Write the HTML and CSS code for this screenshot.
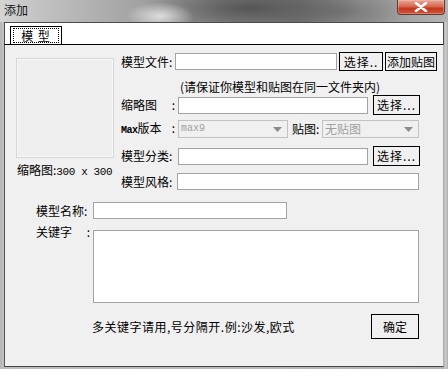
FILE: index.html
```html
<!DOCTYPE html>
<html lang="zh-CN">
<head>
<meta charset="utf-8">
<title>添加</title>
<link rel="stylesheet" href="styles.css">
</head>
<body>
<div class="window">
  <div class="titlebar">
    <span class="title">添加</span>
    <span class="close">
      <svg width="14" height="10" viewBox="0 0 14 10"><path d="M2 1 L12 9 M12 1 L2 9" stroke="#fff" stroke-width="2.6" stroke-linecap="round"/></svg>
    </span>
  </div>
  <div class="client">
    <div class="tabstrip">
      <div class="tab"><span class="tab-label">模 型</span></div>
    </div>
    <div class="panel">
      <div class="top">
        <div class="thumbcol">
          <div class="thumb"></div>
          <div class="caption">缩略图:<span class="mono">300 x 300</span></div>
        </div>
        <div class="form">
          <div class="row row-file">
            <span class="label label-file">模型文件:</span>
            <input class="field field-file" type="text">
            <button class="btn btn-sel1">选择..</button>
            <button class="btn btn-add">添加贴图</button>
          </div>
          <div class="note">(请保证你模型和贴图在同一文件夹内)</div>
          <div class="row row-thumb">
            <span class="label label-split"><span>缩略图</span><span>:</span></span>
            <input class="field field-mid" type="text">
            <button class="btn btn-sel">选择...</button>
          </div>
          <div class="row row-max">
            <span class="label label-split"><span><b class="max">Max</b>版本</span><span>:</span></span>
            <div class="select select-max"><span class="sel-text mono-sm">max9</span><svg class="arrow" width="9" height="5" viewBox="0 0 9 5"><path d="M0 0 H9 L4.5 5 Z" fill="#8c8c8c"/></svg></div>
            <span class="label-map">贴图:</span>
            <div class="select select-map"><span class="sel-text">无贴图</span><svg class="arrow" width="9" height="5" viewBox="0 0 9 5"><path d="M0 0 H9 L4.5 5 Z" fill="#8c8c8c"/></svg></div>
          </div>
          <div class="row row-cat">
            <span class="label">模型分类:</span>
            <input class="field field-mid" type="text">
            <button class="btn btn-sel">选择...</button>
          </div>
          <div class="row row-style">
            <span class="label label-style">模型风格:</span>
            <input class="field field-style" type="text">
          </div>
        </div>
      </div>
      <div class="lower">
        <div class="row row-name">
          <span class="label">模型名称:</span>
          <input class="field field-name" type="text">
        </div>
        <div class="row row-keys">
          <span class="label label-split label-keys"><span>关键字</span><span>:</span></span>
          <textarea class="keys"></textarea>
        </div>
        <div class="footer">
          <span class="hint">多关键字请用,号分隔开.例:沙发,欧式</span>
          <button class="btn btn-ok">确定</button>
        </div>
      </div>
    </div>
  </div>
</div>
</body>
</html>
```

FILE: styles.css
```css
* { box-sizing: border-box; }
html, body { margin: 0; padding: 0; }
body {
  width: 448px;
  height: 369px;
  overflow: hidden;
  font-family: "Noto Sans CJK SC", "Liberation Sans", sans-serif;
  font-size: 12px;
  color: #000;
  background: #bcbcbc;
}
.window {
  width: 448px;
  height: 369px;
  display: flex;
  flex-direction: column;
  background: linear-gradient(to right, #c8c8c8 0, #a9a9a9 1px, #c4c4c4 2px, #bdbdbd 4px, #b4b4b4 444px, #cfcfcf 446px, #a8a8a8 448px);
}
.titlebar {
  height: 22px;
  flex: none;
  display: flex;
  justify-content: space-between;
  align-items: flex-start;
  padding: 0 3px 0 4px;
  background:
    radial-gradient(ellipse 34px 14px at 160px 16px, rgba(230,230,230,0.9), rgba(230,230,230,0)),
    radial-gradient(ellipse 110px 26px at 250px 8px, rgba(80,80,80,0.9), rgba(80,80,80,0)),
    radial-gradient(ellipse 70px 20px at 340px 12px, rgba(110,110,110,0.7), rgba(110,110,110,0)),
    linear-gradient(to right, #d4d4d4, #c2c2c2 40px, #a8a8a8 120px, #8c8c8c 220px, #7c7c7c 300px, #999 380px, #b4b4b4);
}
.title {
  line-height: 20px;
  color: #141414;
  font-size: 12px;
}
.close {
  width: 48px;
  height: 15px;
  border: 1px solid #5e3a34;
  border-top: none;
  border-radius: 0 0 4px 4px;
  background: linear-gradient(#e8a898 0, #d86a52 45%, #c3371c 60%, #d0563a 100%);
  box-shadow: inset 0 0 0 1px rgba(255,210,200,0.35);
  display: flex;
  align-items: center;
  justify-content: center;
}
.client {
  flex: 1;
  display: flex;
  flex-direction: column;
  padding: 0 4px 2px 4px;
}
.tabstrip {
  height: 22px;
  flex: none;
  background: #fff;
  border: 1px solid #4a4a4a;
  border-bottom: none;
  padding: 3px 0 0 5px;
  display: flex;
  align-items: flex-end;
}
.tab {
  width: 52px;
  height: 18px;
  border: 1px solid #000;
  border-bottom: none;
  padding: 1px 2px 1px 2px;
  background: #fff;
}
.tab-label {
  display: block;
  height: 100%;
  border: 1px dotted #000;
  text-align: center;
  line-height: 13px;
  font-size: 12px;
  letter-spacing: 1px;
}
.panel {
  flex: 1;
  background: #f0f0f0;
  border: 1px solid #000;
  border-right-color: #b0b0b0;
  border-left-color: #555;
  border-bottom-color: #444;
  padding: 7px 0 0 11px;
}
.top { display: flex; align-items: flex-start; }
.thumbcol { width: 105px; flex: none; margin-top: 6px; }
.thumb {
  width: 98px;
  height: 100px;
  border: 1px solid #d6d6d6;
  background: #efefef;
  box-shadow: inset 0 0 0 1px #f8f8f8;
}
.caption {
  margin-top: 4px;
  margin-left: 1px;
  line-height: 16px;
  white-space: nowrap;
}
.mono { font-family: "Liberation Mono", "DejaVu Sans Mono", monospace; font-size: 11px; letter-spacing: -0.4px; }
.mono-sm { font-family: "Liberation Mono", "DejaVu Sans Mono", monospace; font-size: 10px; }
.form { display: flex; flex-direction: column; }
.row { display: flex; align-items: center; }
.label { width: 57px; flex: none; line-height: 16px; white-space: nowrap; }
.label-file { width: 54px; }
.label-style { width: 56px; }
.label-split { display: flex; justify-content: space-between; padding-right: 3px; }
.max { font-family: "Liberation Mono", "DejaVu Sans Mono", monospace; font-size: 10px; font-weight: bold; letter-spacing: -0.5px; }
.field {
  height: 17px;
  border: 1px solid #a3a3a3;
  background: #fff;
  margin: 0;
  padding: 0 2px;
  font: inherit;
  outline: none;
}
.field-file { width: 162px; }
.field-mid { width: 190px; }
.field-style { width: 242px; }
.field-name { width: 194px; }
.btn {
  margin: 0;
  padding: 0;
  border: 1px solid #000;
  background: #f0f0f0;
  font: inherit;
  color: #000;
  line-height: 16px;
  white-space: nowrap;
}
.row-file { height: 19px; }
.btn-sel1 { width: 44px; height: 19px; margin-left: 2px; letter-spacing: 1px; }
.btn-add { width: 52px; height: 19px; margin-left: 2px; }
.btn-sel { width: 47px; height: 20px; margin-left: 5px; letter-spacing: 1px; }
.note { margin-top: 8px; margin-left: 59px; line-height: 16px; white-space: nowrap; }
.row-thumb { height: 20px; }
.row-max { margin-top: 5px; height: 18px; }
.select {
  height: 18px;
  border: 1px solid #c2c2c2;
  background: #f0f0f0;
  display: flex;
  align-items: center;
  justify-content: space-between;
  padding: 0 5px 0 2px;
  color: #a0a0a0;
}
.select-max { width: 110px; }
.select-map { width: 97px; }
.sel-text { line-height: 16px; }
.label-map { margin-left: 4px; width: 30px; line-height: 16px; white-space: nowrap; }
.row-cat { margin-top: 8px; height: 20px; }
.row-style { margin-top: 7px; height: 17px; }
.lower { margin-left: 20px; display: flex; flex-direction: column; }
.row-name { margin-top: 12px; height: 17px; }
.row-keys { margin-top: 5px; align-items: flex-start; }
.label-keys { width: 57px; }
.keys {
  margin: 6px 0 0 0;
  width: 326px;
  height: 73px;
  border: 1px solid #a3a3a3;
  background: #fff;
  resize: none;
  outline: none;
  padding: 0;
  font: inherit;
}
.footer {
  margin-top: 11px;
  margin-left: 56px;
  width: 327px;
  display: flex;
  align-items: center;
  justify-content: space-between;
}
.hint { line-height: 16px; white-space: nowrap; letter-spacing: 0.5px; }
.btn-ok { width: 48px; height: 25px; }
```
